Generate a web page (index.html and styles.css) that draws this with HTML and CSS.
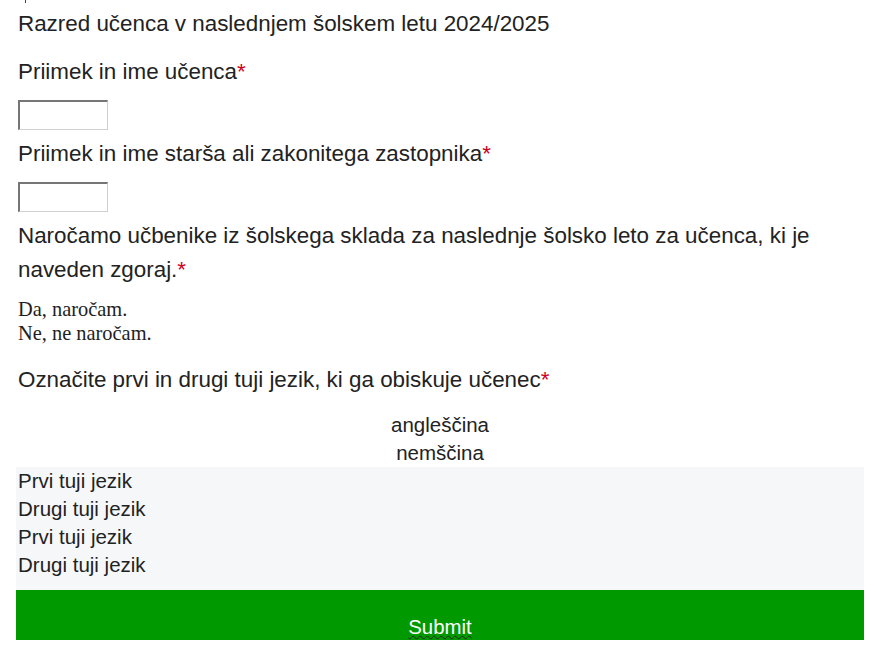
FILE: index.html
```html
<!DOCTYPE html>
<html lang="sl">
<head>
<meta charset="utf-8">
<title>Naročilo učbenikov</title>
<link rel="stylesheet" href="styles.css">
</head>
<body>
<form class="form">
  <div class="tick"></div>
  <p class="plain first">Razred učenca v naslednjem šolskem letu 2024/2025</p>

  <label class="label">Priimek in ime učenca<span class="req">*</span></label>
  <input class="field" type="text">

  <label class="label">Priimek in ime starša ali zakonitega zastopnika<span class="req">*</span></label>
  <input class="field" type="text">

  <label class="label">Naročamo učbenike iz šolskega sklada za naslednje šolsko leto za učenca, ki je naveden zgoraj.<span class="req">*</span></label>
  <div class="radios">
    <div class="radio">Da, naročam.</div>
    <div class="radio">Ne, ne naročam.</div>
  </div>

  <label class="label lang-label">Označite prvi in drugi tuji jezik, ki ga obiskuje učenec<span class="req">*</span></label>
  <div class="grid">
    <div class="grid-head">
      <div>angleščina</div>
      <div>nemščina</div>
    </div>
    <div class="grid-body">
      <div class="row">Prvi tuji jezik</div>
      <div class="row">Drugi tuji jezik</div>
      <div class="row">Prvi tuji jezik</div>
      <div class="row">Drugi tuji jezik</div>
    </div>
  </div>

  <div class="submit-wrap">
    <div class="submit"><span class="submit-text">Submit</span></div>
  </div>
</form>
</body>
</html>
```

FILE: styles.css
```css
html, body {
  margin: 0;
  padding: 0;
  background: #ffffff;
}

body {
  font-family: "Liberation Sans", Arial, sans-serif;
  color: #222222;
}

.form {
  width: 848px;
  margin: 0 0 0 16px;
  display: flex;
  flex-direction: column;
}

.tick {
  width: 1px;
  height: 3px;
  background: #444;
  margin-left: 9px;
}

.plain,
.label {
  font-size: 22.4px;
  line-height: 34px;
  padding-left: 2px;
  margin: 0;
  display: block;
}

.first {
  margin-top: 4px;
}

.label {
  margin-top: 14px;
}

.req {
  color: #d0021b;
}

.field {
  width: 90px;
  height: 30px;
  box-sizing: border-box;
  margin: 11px 0 0 2px;
  padding: 0;
  border-style: solid;
  border-width: 2px 1px 1px 2px;
  border-color: #767676 #d0d0d0 #d0d0d0 #767676;
  background: #fff;
}

.field + .label {
  margin-top: 7px;
}

.radios {
  margin-top: 10px;
  padding-left: 2px;
  font-family: "Liberation Serif", "Times New Roman", serif;
  font-size: 20.4px;
  line-height: 24px;
  color: #1e1e1e;
}

.lang-label {
  margin-top: 18px;
}

.grid {
  margin-top: 14px;
  display: flex;
  flex-direction: column;
}

.grid-head {
  text-align: center;
  font-size: 20.5px;
  line-height: 28px;
}

.grid-body {
  background: #f6f7f9;
  padding-bottom: 11px;
}

.row {
  font-size: 20.5px;
  line-height: 28px;
  padding-left: 2px;
}

.submit-wrap {
  height: 50px;
  overflow: hidden;
}

.submit {
  background: #009900;
  height: 72px;
  box-sizing: border-box;
  padding-top: 20px;
  text-align: center;
  font-size: 20.4px;
  line-height: 34px;
  color: #ffffff;
}

.submit-text {
  text-decoration-line: underline;
  text-decoration-style: wavy;
  text-decoration-color: #2a2a2a;
  text-decoration-thickness: 1px;
  text-underline-offset: 1px;
}
```
